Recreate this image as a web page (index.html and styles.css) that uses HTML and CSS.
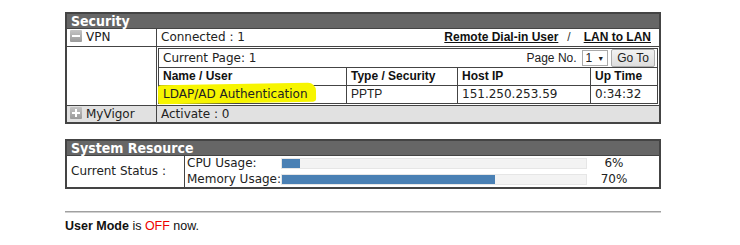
FILE: index.html
```html
<!DOCTYPE html>
<html>
<head>
<meta charset="utf-8">
<link rel="stylesheet" href="styles.css">
</head>
<body>
<div class="page">
  <table class="box sec">
    <tr><th colspan="2" class="title">Security</th></tr>
    <tr>
      <td class="lbl"><span class="ico minus"></span>VPN</td>
      <td class="val">
        <div class="vpnline">
          <span>Connected : 1</span>
          <span class="links"><a>Remote Dial-in User</a><span class="slash">/</span><a>LAN to LAN</a></span>
        </div>
      </td>
    </tr>
    <tr>
      <td class="lbl empty"></td>
      <td class="inner-cell">
        <table class="inner">
          <tr>
            <td colspan="4" class="pager">
              <div class="pagerline">
                <span class="cur">Current Page: 1</span>
                <span class="pg">Page No. <span class="sel">1<span class="arr">&#9660;</span></span><span class="btn">Go To</span></span>
              </div>
            </td>
          </tr>
          <tr class="hd">
            <td class="c1">Name / User</td>
            <td class="c2">Type / Security</td>
            <td class="c3">Host IP</td>
            <td class="c4">Up Time</td>
          </tr>
          <tr class="dat">
            <td class="c1"><span class="hl">LDAP/AD Authentication</span></td>
            <td class="c2 ar">PPTP</td>
            <td class="c3">151.250.253.59</td>
            <td class="c4">0:34:32</td>
          </tr>
        </table>
      </td>
    </tr>
    <tr class="grey">
      <td class="lbl"><span class="ico plus"></span>MyVigor</td>
      <td class="val">Activate : 0</td>
    </tr>
  </table>

  <table class="box sys">
    <tr><th colspan="2" class="title">System Resource</th></tr>
    <tr>
      <td class="stat">Current Status :</td>
      <td class="usage">
        <div class="urow"><span class="uname">CPU Usage:</span><span class="track"><span class="fill" style="width:6%"></span></span><span class="pct">6%</span></div>
        <div class="urow"><span class="uname">Memory Usage:</span><span class="track"><span class="fill" style="width:70%"></span></span><span class="pct">70%</span></div>
      </td>
    </tr>
  </table>

  <div class="rule"></div>
  <p class="mode"><b>User Mode</b> is <span class="off">OFF</span> now.</p>
</div>
</body>
</html>
```
FILE: styles.css
```css
html, body { margin: 0; padding: 0; background: #fff; }
.page { padding: 12px 0 0 65px; width: 596px; }
.box {
  border-collapse: collapse;
  width: 596px;
  border: 2px solid #444;
  font-family: "DejaVu Sans", Verdana, sans-serif;
  font-size: 12px;
  line-height: 15px;
  color: #222;
}
.box td { border: 1px solid #444; padding: 0; }
.title {
  background: #666;
  color: #fff;
  text-align: left;
  font-family: "DejaVu Sans Condensed", "DejaVu Sans", Verdana, sans-serif;
  font-weight: bold;
  font-size: 14px;
  height: 14px;
  line-height: 14px;
  padding: 0 0 0 4px;
  border: 1px solid #444;
}
.lbl { width: 86px; height: 17px; padding-left: 3px !important; white-space: nowrap; }
.ico {
  display: inline-block;
  width: 12px; height: 12px;
  background: linear-gradient(#c4c4c4, #9a9a9a);
  border-radius: 1px;
  vertical-align: -1px;
  margin-right: 4px;
  position: relative;
}
.ico::before {
  content: ""; position: absolute; left: 2px; top: 5px; width: 8px; height: 2px; background: #fff;
}
.plus::after {
  content: ""; position: absolute; left: 5px; top: 2px; width: 2px; height: 8px; background: #fff;
}
.val { padding-left: 4px !important; }
.vpnline { display: flex; justify-content: space-between; align-items: center; padding-right: 8px; }
.links { font-family: "Liberation Sans", Arial, sans-serif; font-weight: bold; font-size: 12px; }
.links a { text-decoration: underline; color: #111; }
.slash { font-weight: normal; margin: 0 13px 0 9px; color: #333; }
.inner-cell { padding: 1px !important; }
.inner { border-collapse: collapse; width: 100%; }
.inner td { border: 1px solid #444; padding: 0 0 0 4px; height: 17px; }
.inner td.pager { height: 17px; }
.pagerline { display: flex; justify-content: space-between; align-items: center; }
.pg { font-family: "Liberation Sans", Arial, sans-serif; font-size: 12px; display: flex; align-items: center; padding-right: 2px; }
.sel {
  display: inline-flex; align-items: center; margin-left: 5px;
  border: 1px solid #aaa; background: #fff; height: 14px; padding: 0 3px; font-size: 12px;
}
.arr { font-size: 7px; margin-left: 5px; }
.btn {
  display: inline-block; margin-left: 3px;
  border: 1px solid #adadad; background: linear-gradient(#f2f2f2, #dedede);
  padding: 0 5px; height: 16px; line-height: 16px; font-size: 12px; border-radius: 2px;
}
.hd td { font-family: "Liberation Sans", Arial, sans-serif; font-weight: bold; font-size: 12px; color: #111; }
.c1 { width: 183px; }
.c2 { width: 106px; }
.c3 { width: 128px; }
.ar { font-family: "Liberation Sans", Arial, sans-serif; }
.hl { position: relative; z-index: 0; }
.hl::before {
  content: ""; position: absolute; z-index: -1;
  left: -5px; right: -8px; top: -3px; bottom: -2px;
  background: #f7f500;
  border-radius: 3px 8px 3px 2px;
  transform: rotate(-1deg);
}
.grey td { background: #e1e1e1; height: 16px; }
.sys { margin-top: 15px; }
.stat { width: 113px; padding-left: 4px !important; }
.usage { padding: 0 0 0 2px !important; line-height: 15.5px; }
.urow { display: flex; align-items: center; white-space: nowrap; }
.uname { width: 94px; flex: none; }
.track {
  flex: none;
  width: 304px; height: 9px; background: #f3f3f3; border: 1px solid #e6e6e6; display: block;
}
.fill { display: block; height: 9px; background: #4a80b4; }
.pct { width: 50px; text-align: center; padding-left: 2px; flex: none; }
.rule { margin-top: 22px; height: 1px; background: #a0a0a0; border-bottom: 1px solid #d0d0d0; }
.mode { margin: 6px 0 0 0; font-family: "Liberation Sans", Arial, sans-serif; font-size: 12.5px; color: #111; }
.off { color: #e00; }
```
